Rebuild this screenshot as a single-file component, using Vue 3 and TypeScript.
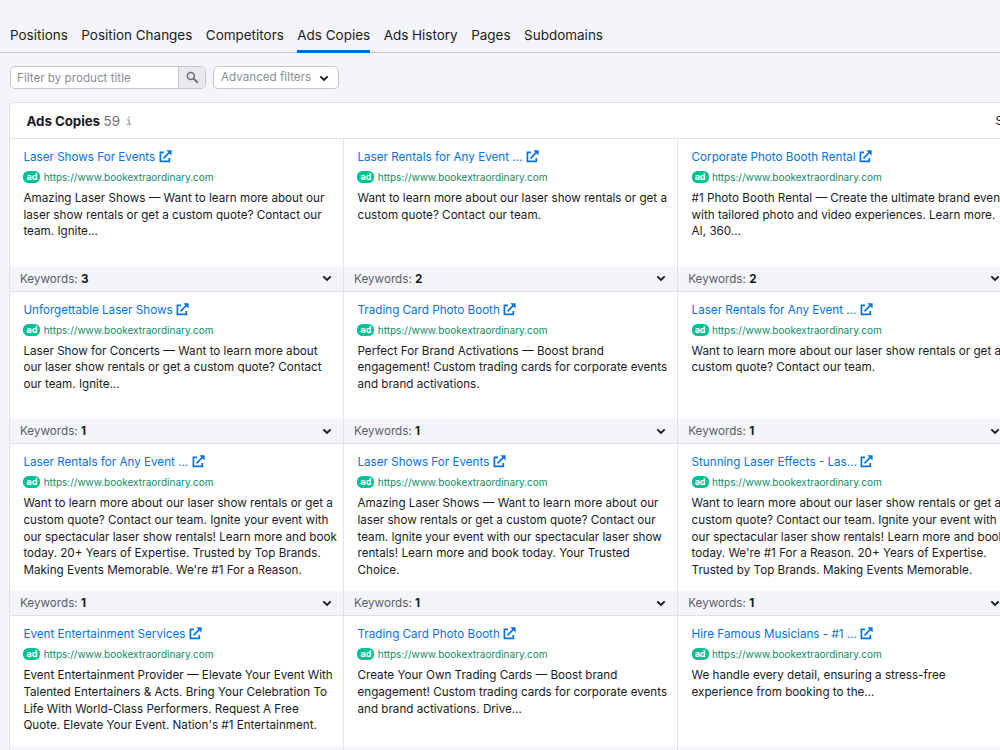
<script setup lang="ts">
interface Ad {
  title: string
  lines: string[]
  keywords: number
}

const tabs: string[] = ['Positions', 'Position Changes', 'Competitors', 'Ads Copies', 'Ads History', 'Pages', 'Subdomains']
const activeTab = 'Ads Copies'
const url = 'https://www.bookextraordinary.com'

const ads: Ad[] = [
  {
    title: 'Laser Shows For Events',
    lines: ['Amazing Laser Shows — Want to learn more about our', 'laser show rentals or get a custom quote? Contact our', 'team. Ignite...'],
    keywords: 3,
  },
  {
    title: 'Laser Rentals for Any Event ...',
    lines: ['Want to learn more about our laser show rentals or get a', 'custom quote? Contact our team.'],
    keywords: 2,
  },
  {
    title: 'Corporate Photo Booth Rental',
    lines: ['#1 Photo Booth Rental — Create the ultimate brand event', 'with tailored photo and video experiences. Learn more.', 'AI, 360...'],
    keywords: 2,
  },
  {
    title: 'Unforgettable Laser Shows',
    lines: ['Laser Show for Concerts — Want to learn more about', 'our laser show rentals or get a custom quote? Contact', 'our team. Ignite...'],
    keywords: 1,
  },
  {
    title: 'Trading Card Photo Booth',
    lines: ['Perfect For Brand Activations — Boost brand', 'engagement! Custom trading cards for corporate events', 'and brand activations.'],
    keywords: 1,
  },
  {
    title: 'Laser Rentals for Any Event ...',
    lines: ['Want to learn more about our laser show rentals or get a', 'custom quote? Contact our team.'],
    keywords: 1,
  },
  {
    title: 'Laser Rentals for Any Event ...',
    lines: [
      'Want to learn more about our laser show rentals or get a',
      'custom quote? Contact our team. Ignite your event with',
      'our spectacular laser show rentals! Learn more and book',
      'today. 20+ Years of Expertise. Trusted by Top Brands.',
      "Making Events Memorable. We're #1 For a Reason.",
    ],
    keywords: 1,
  },
  {
    title: 'Laser Shows For Events',
    lines: [
      'Amazing Laser Shows — Want to learn more about our',
      'laser show rentals or get a custom quote? Contact our',
      'team. Ignite your event with our spectacular laser show',
      'rentals! Learn more and book today. Your Trusted',
      'Choice.',
    ],
    keywords: 1,
  },
  {
    title: 'Stunning Laser Effects - Las...',
    lines: [
      'Want to learn more about our laser show rentals or get a',
      'custom quote? Contact our team. Ignite your event with',
      'our spectacular laser show rentals! Learn more and book',
      "today. We're #1 For a Reason. 20+ Years of Expertise.",
      'Trusted by Top Brands. Making Events Memorable.',
    ],
    keywords: 1,
  },
  {
    title: 'Event Entertainment Services',
    lines: [
      'Event Entertainment Provider — Elevate Your Event With',
      'Talented Entertainers & Acts. Bring Your Celebration To',
      'Life With World-Class Performers. Request A Free',
      "Quote. Elevate Your Event. Nation's #1 Entertainment.",
    ],
    keywords: 1,
  },
  {
    title: 'Trading Card Photo Booth',
    lines: ['Create Your Own Trading Cards — Boost brand', 'engagement! Custom trading cards for corporate events', 'and brand activations. Drive...'],
    keywords: 1,
  },
  {
    title: 'Hire Famous Musicians - #1 ...',
    lines: ['We handle every detail, ensuring a stress-free', 'experience from booking to the...'],
    keywords: 1,
  },
]
</script>

<template>
  <div class="page">
    <nav class="tabs">
      <a v-for="tab in tabs" :key="tab" class="tab" :class="{ active: tab === activeTab }">{{ tab }}</a>
    </nav>

    <div class="filters">
      <div class="search">
        <span class="search-text">Filter by product title</span>
        <span class="search-button">
          <svg width="13" height="13" viewBox="0 0 13 13" fill="none" stroke="#6c6e79">
            <circle cx="4.9" cy="4.9" r="3.5" stroke-width="1.5" />
            <path d="M7.6 7.6 L11.8 11.8" stroke-width="2" />
          </svg>
        </span>
      </div>
      <div class="advanced">
        <span>Advanced filters</span>
        <svg class="chevron" width="10" height="7" viewBox="0 0 10 7"><path d="M1.3 1.4 L5 5 L8.7 1.4" /></svg>
      </div>
    </div>

    <section class="card">
      <header class="card-head">
        <strong>Ads Copies</strong>
        <span class="count">59</span>
        <svg class="info" width="6" height="10" viewBox="0 0 6 10">
          <path d="M2.4 0.4h1.7v1.5h-1.7z M1 3.2h3v4.6h1.4v1.2h-5v-1.2h1.9v-3.4h-1.3z" fill="#a9abb6" />
        </svg>
        <span class="sort">S</span>
      </header>

      <div class="grid">
        <article v-for="(ad, i) in ads" :key="i" class="ad">
          <div class="body">
            <div class="title">
              <span>{{ ad.title }}</span>
              <svg width="13" height="13" viewBox="0 0 13 13" fill="none" stroke="#0873dc" stroke-width="1.7">
                <path d="M5 2.4H1.4V11.4H10.3V8" />
                <path d="M4.5 8.3L10.6 2.2" />
                <path d="M7.3 0.2H12.6V5.5Z" fill="#0873dc" stroke="none" />
              </svg>
            </div>
            <div class="link"><span class="badge">ad</span><span class="url">{{ url }}</span></div>
            <div class="desc"><div v-for="line in ad.lines" :key="line">{{ line }}</div></div>
          </div>
          <footer class="keywords">
            <span>Keywords: <b>{{ ad.keywords }}</b></span>
            <svg class="chevron" width="10" height="7" viewBox="0 0 10 7"><path d="M1.3 1.4 L5 5 L8.7 1.4" /></svg>
          </footer>
        </article>
      </div>
    </section>
  </div>
</template>

<style>
body {
  overflow: hidden;
}
</style>

<style scoped>
.page {
  width: 1000px;
  height: 750px;
  box-sizing: border-box;
  overflow: hidden;
  padding-top: 19px;
  background: #f4f5f9;
  color: #191b23;
  font-family: Inter, "Liberation Sans", sans-serif;
  font-size: 11.67px;
  white-space: nowrap;
}
.tabs {
  display: flex;
  height: 34px;
  box-sizing: border-box;
  padding-left: 10px;
  gap: 13.5px;
  border-bottom: 1px solid #c4c7cf;
}
.tab {
  height: 34px;
  box-sizing: border-box;
  line-height: 33px;
  font-size: 13.48px;
}
.tab.active {
  border-bottom: 3px solid #006dca;
}
.filters {
  display: flex;
  gap: 7px;
  padding: 13px 0 0 10px;
  color: #8a8e9b;
}
.search,
.advanced {
  display: flex;
  box-sizing: border-box;
  height: 23px;
  border: 1px solid #c4c7cf;
  border-radius: 5px;
  background: #fff;
  line-height: 22px;
}
.search {
  width: 196px;
  overflow: hidden;
}
.search-text {
  flex: 1;
  padding-left: 6px;
}
.search-button {
  display: flex;
  width: 26px;
  align-items: center;
  justify-content: center;
  border-left: 1px solid #c4c7cf;
  background: #e8e9ef;
}
.advanced {
  width: 126px;
  padding: 0 9px 0 7px;
  align-items: center;
  justify-content: space-between;
  line-height: 20px;
}
.advanced span {
  margin-top: -1px;
}
.advanced .chevron {
  margin-top: 1px;
}
.chevron path {
  fill: none;
  stroke: #191b23;
  stroke-width: 1.9;
}
.card {
  width: 1003px;
  margin: 13px 0 0 9px;
  border: 1px solid #e0e1e9;
  border-radius: 5px;
  background: #fff;
}
.card-head {
  display: flex;
  height: 35px;
  align-items: center;
  padding-left: 16.5px;
  border-bottom: 1px solid #e0e1e9;
  font-size: 13.35px;
}
.card-head strong {
  letter-spacing: -0.07px;
}
.count {
  margin-left: 3.5px;
  color: #6c6e79;
}
.info {
  margin-left: 6.5px;
}
.sort {
  margin-left: auto;
  margin-right: 10px;
  font-size: 11.67px;
}
.grid {
  display: grid;
  grid-template-columns: repeat(3, 334.1px);
  grid-template-rows: 152.7px 152.7px 172px 156px;
}
.ad {
  display: flex;
  flex-direction: column;
  border-right: 1px solid #e0e1e9;
}
.body {
  flex: 1;
  padding: 9px 0 0 13.4px;
}
.title {
  display: flex;
  height: 18px;
  align-items: center;
  gap: 3.6px;
  color: #0873dc;
}
.title svg {
  margin-top: -1px;
}
.link {
  display: flex;
  height: 17px;
  margin-top: 2.4px;
  align-items: center;
  gap: 3.3px;
  font-size: 10px;
  color: #118a67;
}
.badge {
  width: 17px;
  height: 12px;
  border-radius: 5.5px;
  background: #00c192;
  color: #fff;
  font-size: 9px;
  font-weight: 700;
  line-height: 11px;
  text-align: center;
}
.desc {
  margin-top: 4.6px;
  line-height: 16.6px;
}
.keywords {
  display: flex;
  height: 24px;
  align-items: center;
  justify-content: space-between;
  padding: 0 11.5px 0 10px;
  border-bottom: 1px solid #e0e1e9;
  background: #f4f5f9;
  color: #5b5e69;
}
.keywords b {
  color: #191b23;
  font-weight: 700;
}
</style>
